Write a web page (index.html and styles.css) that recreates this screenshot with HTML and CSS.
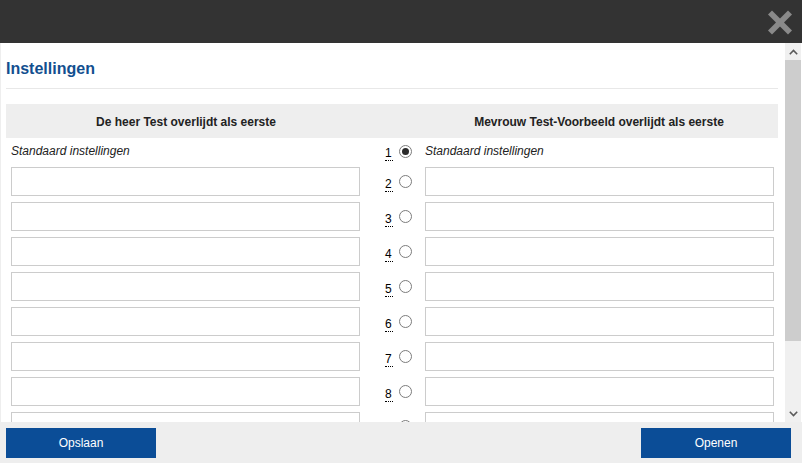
FILE: index.html
```html
<!DOCTYPE html>
<html lang="nl">
<head>
<meta charset="utf-8">
<title>Instellingen</title>
<link rel="stylesheet" href="styles.css">
</head>
<body>
<div class="dialog">
  <header class="topbar">
    <svg class="close" width="24" height="25" viewBox="0 0 24 25" aria-label="Sluiten">
      <path d="M4 0.5 L12 8.5 L20 0.5 L24 4.5 L16 12.5 L24 20.5 L20 24.5 L12 16.5 L4 24.5 L0 20.5 L8 12.5 L0 4.5 Z" fill="#8a8a8a"/>
    </svg>
  </header>
  <div class="main">
    <div class="scroll">
      <h1 class="title">Instellingen</h1>
      <hr class="sep">
      <div class="grid">
        <div class="head">De heer Test overlijdt als eerste</div>
        <div class="head"></div>
        <div class="head">Mevrouw Test-Voorbeeld overlijdt als eerste</div>

        <div class="cell"><em>Standaard instellingen</em></div>
        <div class="mid"><abbr>1</abbr><span class="radio checked"></span></div>
        <div class="cell"><em>Standaard instellingen</em></div>

        <div class="cell"><input class="field" type="text"></div>
        <div class="mid"><abbr>2</abbr><span class="radio"></span></div>
        <div class="cell"><input class="field" type="text"></div>

        <div class="cell"><input class="field" type="text"></div>
        <div class="mid"><abbr>3</abbr><span class="radio"></span></div>
        <div class="cell"><input class="field" type="text"></div>

        <div class="cell"><input class="field" type="text"></div>
        <div class="mid"><abbr>4</abbr><span class="radio"></span></div>
        <div class="cell"><input class="field" type="text"></div>

        <div class="cell"><input class="field" type="text"></div>
        <div class="mid"><abbr>5</abbr><span class="radio"></span></div>
        <div class="cell"><input class="field" type="text"></div>

        <div class="cell"><input class="field" type="text"></div>
        <div class="mid"><abbr>6</abbr><span class="radio"></span></div>
        <div class="cell"><input class="field" type="text"></div>

        <div class="cell"><input class="field" type="text"></div>
        <div class="mid"><abbr>7</abbr><span class="radio"></span></div>
        <div class="cell"><input class="field" type="text"></div>

        <div class="cell"><input class="field" type="text"></div>
        <div class="mid"><abbr>8</abbr><span class="radio"></span></div>
        <div class="cell"><input class="field" type="text"></div>

        <div class="cell"><input class="field" type="text"></div>
        <div class="mid"><span class="radio"></span></div>
        <div class="cell"><input class="field" type="text"></div>
      </div>
    </div>
    <div class="scrollbar">
      <div class="sb-btn">
        <svg width="9" height="6" viewBox="0 0 9 6"><path d="M0.8 5.2 L4.5 1.5 L8.2 5.2" fill="none" stroke="#5a5a5a" stroke-width="1.6"/></svg>
      </div>
      <div class="sb-track"><div class="sb-thumb"></div></div>
      <div class="sb-btn">
        <svg width="9" height="6" viewBox="0 0 9 6"><path d="M0.8 0.8 L4.5 4.5 L8.2 0.8" fill="none" stroke="#5a5a5a" stroke-width="1.6"/></svg>
      </div>
    </div>
  </div>
  <footer class="footer">
    <button class="btn" type="button">Opslaan</button>
    <button class="btn" type="button">Openen</button>
  </footer>
</div>
</body>
</html>
```
FILE: styles.css
```css
html, body {
  margin: 0;
  padding: 0;
  background: #fff;
}
body {
  font-family: "Liberation Sans", Arial, sans-serif;
  font-size: 12px;
  color: #111;
}
.dialog {
  width: 802px;
  height: 463px;
  display: flex;
  flex-direction: column;
  overflow: hidden;
}
.topbar {
  height: 43px;
  flex: none;
  background: #333333;
  display: flex;
  align-items: center;
  justify-content: flex-end;
  padding-right: 10px;
  padding-top: 2px;
  box-sizing: border-box;
}
.close {
  display: block;
}
.main {
  flex: 1;
  display: flex;
  min-height: 0;
}
.scroll {
  flex: 1;
  overflow: hidden;
  border-left: 1px solid #eeeeee;
  padding-left: 5px;
  padding-right: 7px;
}
.title {
  margin: 0;
  padding-top: 16px;
  font-size: 16px;
  line-height: 20px;
  font-weight: bold;
  color: #124f8f;
}
.sep {
  margin: 9px 0 15px 0;
  border: 0;
  border-top: 1px solid #e8e8e8;
  height: 0;
}
.grid {
  display: grid;
  grid-template-columns: 360px 54px 358px;
  grid-template-rows: 34px 26px;
  grid-auto-rows: 35px;
}
.head {
  background: #eeeeee;
  font-weight: bold;
  color: #222;
  display: flex;
  align-items: center;
  justify-content: center;
  padding-top: 1px;
  box-sizing: border-box;
}
.cell {
  display: flex;
  align-items: center;
  padding-left: 5px;
}
.cell em {
  font-style: italic;
  color: #222;
}
.field {
  width: 349px;
  height: 29px;
  box-sizing: border-box;
  border: 1px solid #cccccc;
  margin: 0;
  padding: 0 6px;
  background: #fff;
  font: inherit;
}
.mid {
  display: flex;
  align-items: center;
  padding-left: 19px;
}
.mid abbr {
  display: inline-block;
  width: 8px;
  line-height: 14px;
  margin-top: 5px;
  margin-right: 6px;
  border-bottom: 1px dotted #000;
  text-decoration: none;
  color: #000;
  white-space: nowrap;
}
.mid .radio:first-child {
  margin-left: 14px;
}
.radio {
  width: 13px;
  height: 13px;
  box-sizing: border-box;
  border: 1px solid #7c7c7c;
  border-radius: 50%;
  background: #fff;
  display: flex;
  align-items: center;
  justify-content: center;
}
.radio.checked::after {
  content: "";
  width: 7px;
  height: 7px;
  border-radius: 50%;
  background: #2b2b2b;
}
.scrollbar {
  width: 16px;
  margin-right: 1px;
  flex: none;
  display: flex;
  flex-direction: column;
  background: #f0f0f0;
}
.sb-btn {
  height: 17px;
  flex: none;
  display: flex;
  align-items: center;
  justify-content: center;
}
.sb-track {
  flex: 1;
}
.sb-thumb {
  height: 281px;
  background: #cdcdcd;
}
.footer {
  height: 41px;
  flex: none;
  background: #eeeeee;
  display: flex;
  justify-content: space-between;
  align-items: flex-start;
  padding: 6px 11px 0 6px;
  box-sizing: border-box;
}
.btn {
  width: 150px;
  height: 30px;
  border: 0;
  margin: 0;
  background: #0b4d97;
  color: #fff;
  font-family: "Liberation Sans", Arial, sans-serif;
  font-size: 12px;
  padding: 0;
}
```
